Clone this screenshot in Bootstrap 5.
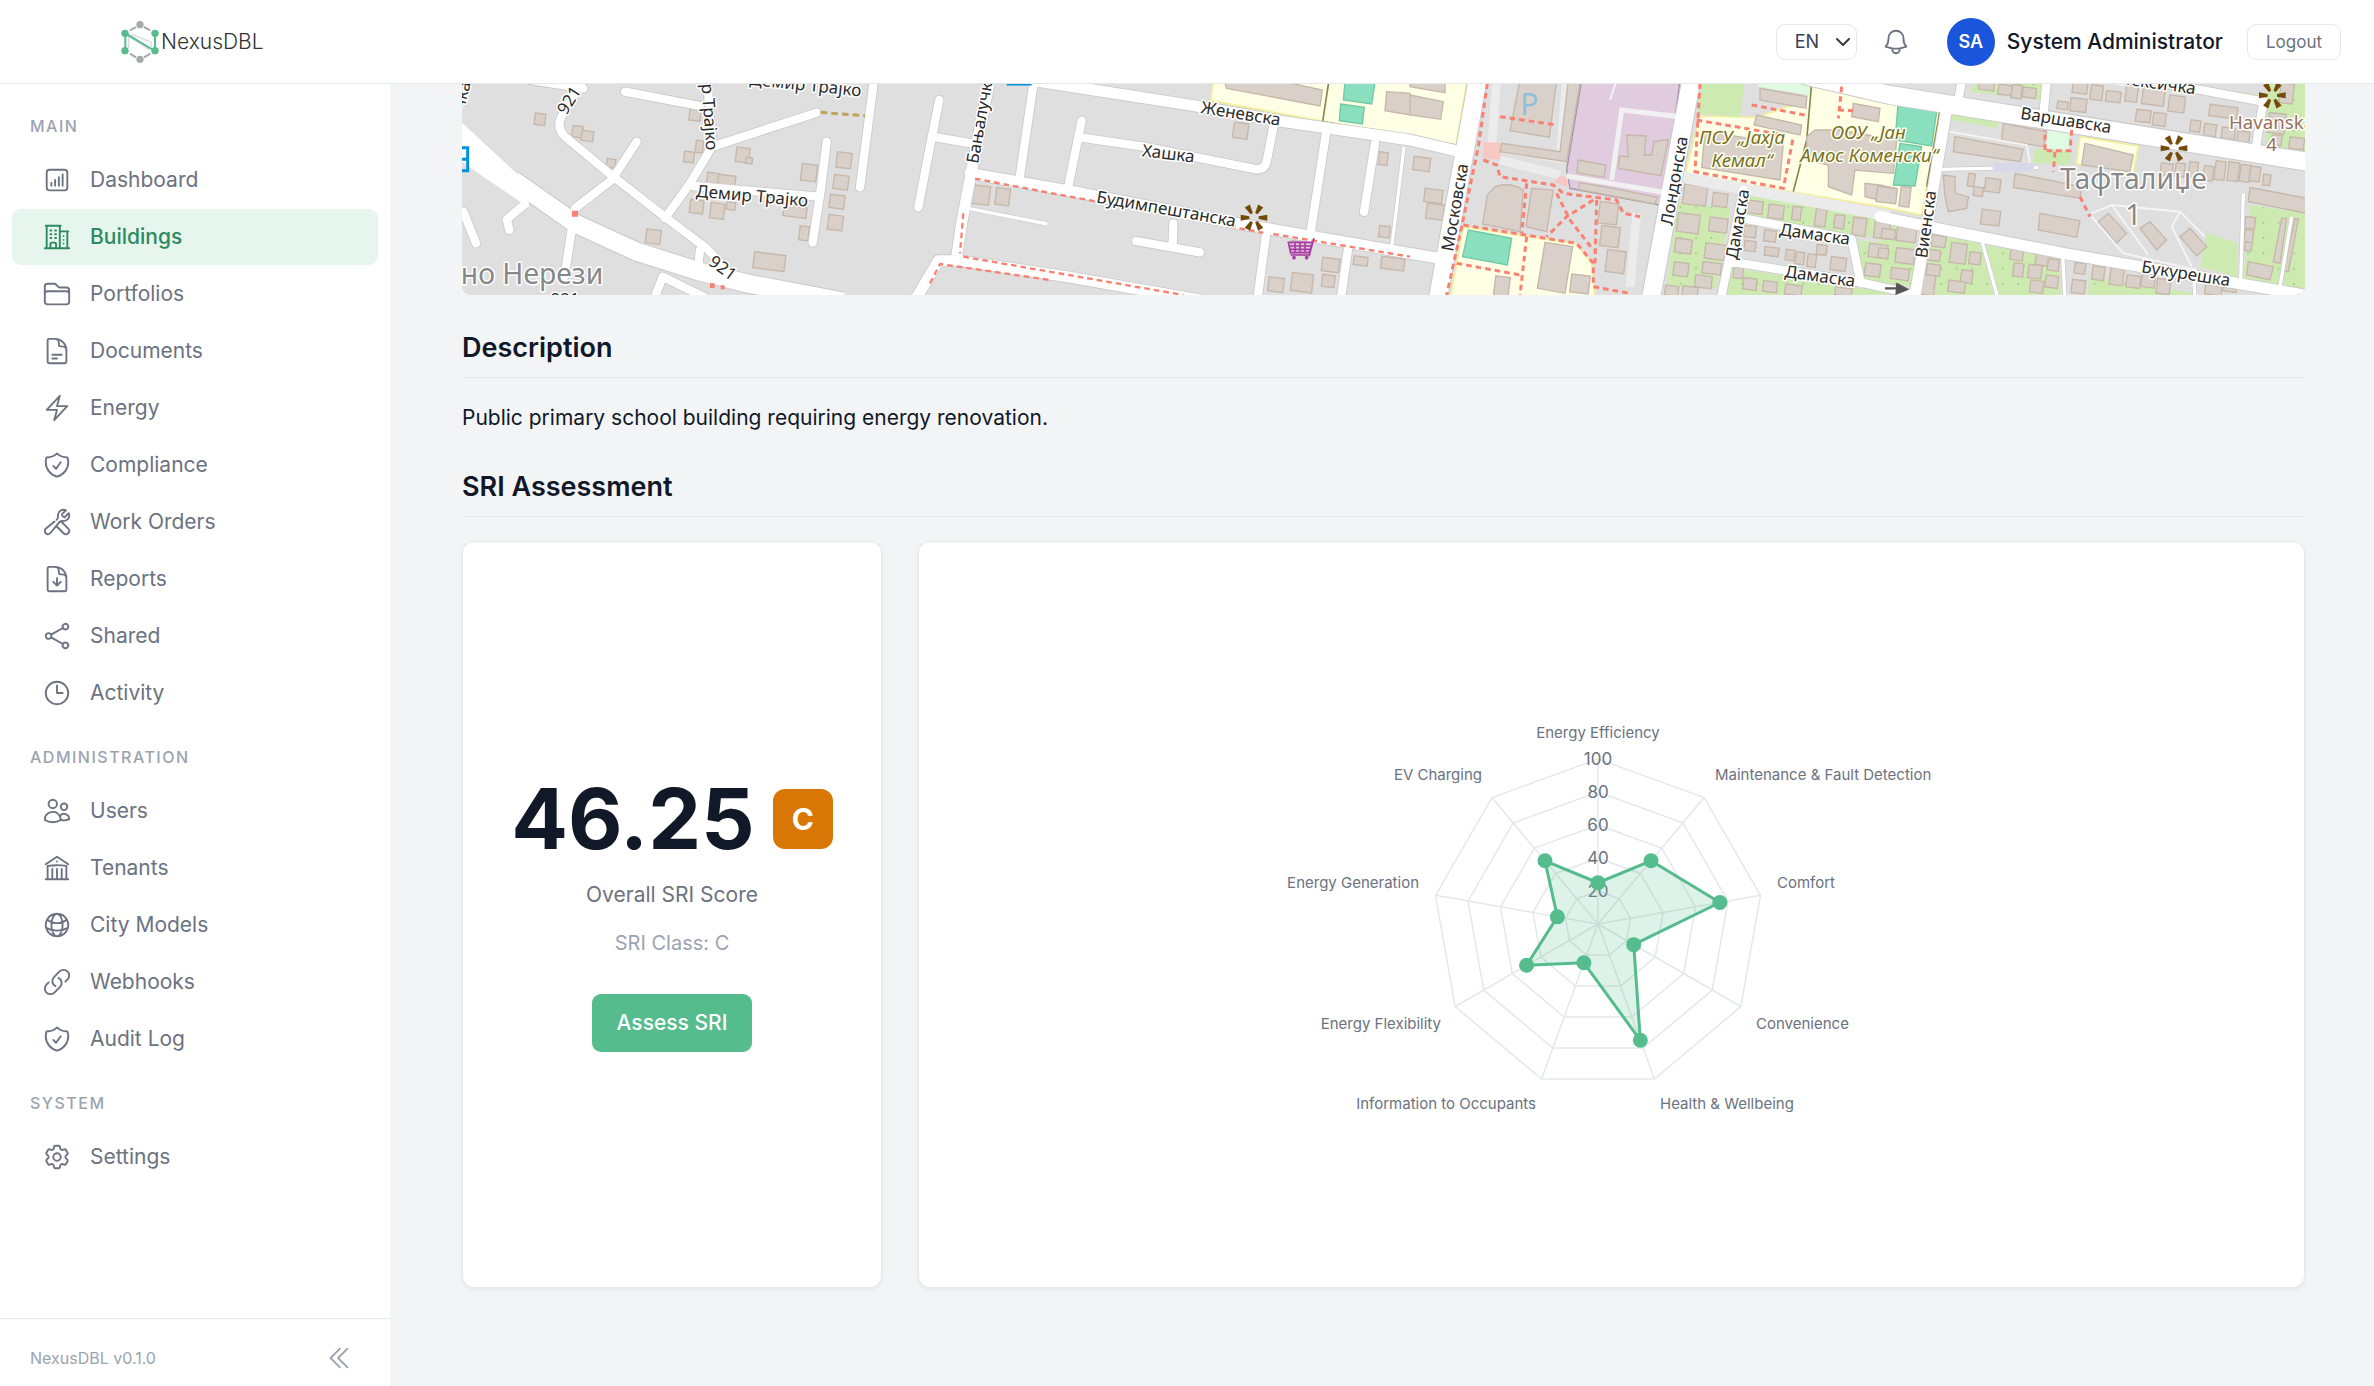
<!DOCTYPE html>
<html lang="en">
<head>
<meta charset="utf-8">
<meta name="viewport" content="width=device-width, initial-scale=1">
<title>NexusDBL – Building</title>
<link href="https://cdn.jsdelivr.net/npm/bootstrap@5.3.0/dist/css/bootstrap.min.css" rel="stylesheet">
<style>
body{font-family:Inter,"Liberation Sans",sans-serif;font-size:21px;line-height:32px;color:#111827;background:#f3f4f6}
.shell{min-height:100vh}
.topbar{height:84px;background:#fff;border-bottom:1px solid #e5e7eb;padding:0 33px 0 120px}
.brand-name{font-size:21px;line-height:32px;color:#333;font-weight:300}
.ico{width:30px;height:30px;flex:none;fill:none;stroke:currentColor;stroke-width:1.5;stroke-linecap:round;stroke-linejoin:round}
.lang{width:81px;height:36px;padding:0 24px 0 18px;font-size:18px;line-height:24px;color:#374151;border-color:#e5e7eb;border-radius:9px;background-position:right 5px center;background-size:16px 16px}
.iconbtn{color:#6b7280;background:none;border:0;padding:0;line-height:1;display:flex}
.iconbtn.faint{color:#9ca3af}
.user{gap:12px}
.avatar{width:48px;height:48px;border-radius:50%;background:#1a56db;color:#fff;font-size:18px;font-weight:600}
.who{font-weight:500}
.logout{height:36px;padding:0 18px;font-size:17px;line-height:24px;color:#6b7280;background:#fff;border:1px solid #e5e7eb;border-radius:9px}
.side{width:390px;flex:none;background:#fff}
.side-head{font-size:16px;line-height:24px;font-weight:500;letter-spacing:1.5px;color:#9ca3af;padding:0 30px;margin:24px 0 14px}
.side-head:first-child{margin-top:30px}
.side-nav{gap:1px;padding:0 12px}
.side-nav .nav-link{height:56px;padding:0 30px;gap:18px;color:#6b7280;border-radius:9px;font-size:21px}
.side-nav .nav-link.active{background:#e6f5ed;color:#2d8a5e;font-weight:500}
.side-foot{border-top:1px solid #e5e7eb;height:68px;padding:10px 36px 0 30px;font-size:16px;color:#9ca3af}
.page{padding:0 69px 98px 72px}
.map{height:211px;border-radius:0 0 9px 9px;overflow:hidden;background:#dfdfdf}
.map svg{display:block;width:100%;height:100%}
.sect{font-size:27px;line-height:36px;font-weight:600;padding-bottom:11px;margin:35px 0 24px;border-bottom:1px solid #e5e7eb}
.descr{margin:0}
.panels{gap:36px}
.panel{background:#fff;border:1px solid #e5e7eb;border-radius:12px;box-shadow:0 2px 4px rgba(0,0,0,.05)}
.score-panel{width:420px;flex:none}
.score-row{gap:18px}
.score{font-size:84px;line-height:84px;font-weight:700}
.grade{width:60px;height:60px;border-radius:12px;background:#d97706;color:#fff;font-size:30px;font-weight:700}
.score-label{color:#6b7280;margin:18px 0 17px}
.score-class{font-size:20px;line-height:30px;color:#9ca3af}
.btn-assess{--bs-btn-bg:#54bc8d;--bs-btn-color:#fff;--bs-btn-hover-bg:#47a97c;--bs-btn-hover-color:#fff;height:58px;padding:0 25px;margin-top:36px;font-size:21px;font-weight:500;border:0;border-radius:9px}
.radar{width:653px;height:400px;max-width:100%}
.radar text{font-family:Inter,sans-serif;font-size:15px;fill:#6b7280}
.radar .tick{font-size:17px;text-anchor:middle}
.st text{font-family:"Noto Sans",sans-serif;font-size:51px;fill:#2b2b2b;text-anchor:middle;paint-order:stroke;stroke:#fff;stroke-width:9px;stroke-linejoin:round}
.st .place{font-size:85px;fill:#888}
.st .school{font-size:56px;fill:#777020;font-style:italic;stroke:#fffff0}
.st .shop{font-size:56px;fill:#96705a}
.st .from{text-anchor:start}
.st .parking{font-size:90px;fill:#8fc0dc;stroke:none}
</style>
</head>
<body>
<div class="shell d-flex flex-column">
<header class="topbar d-flex align-items-center justify-content-between">
  <a href="#" class="d-flex align-items-center text-decoration-none">
    <svg width="41" height="44" viewBox="358 57 123 132" fill="none" aria-hidden="true">
      <path d="M388 88 406 78M430 78 449 88M388 158 406 169M430 169 449 158" stroke="#a7a9ac" stroke-width="6"/>
      <path d="M384 142V106l62 40M452 138V124L392 100" stroke="#dcdddf" stroke-width="5"/>
      <path d="M374 150V97l89 53V97" stroke="#54bc8d" stroke-width="6"/>
      <g fill="#a7a9ac"><circle cx="418" cy="71" r="11"/><circle cx="418" cy="175" r="11"/></g>
      <g fill="#54bc8d"><circle cx="373" cy="97" r="11"/><circle cx="373" cy="149" r="11"/><circle cx="463" cy="97" r="11"/><circle cx="463" cy="149" r="11"/></g>
    </svg>
    <span class="brand-name">NexusDBL</span>
  </a>
  <div class="d-flex align-items-center">
    <select class="form-select lang" aria-label="Language"><option>EN</option></select>
    <button class="iconbtn ms-4" aria-label="Notifications"><svg class="ico" viewBox="0 0 24 24"><path d="M14.857 17.082a23.848 23.848 0 0 0 5.454-1.31A8.967 8.967 0 0 1 18 9.75V9A6 6 0 0 0 6 9v.75a8.967 8.967 0 0 1-2.312 6.022c1.733.64 3.56 1.085 5.455 1.31m5.714 0a24.255 24.255 0 0 1-5.714 0m5.714 0a3 3 0 1 1-5.714 0"/></svg></button>
    <div class="user d-flex align-items-center ps-4 ms-2 me-4"><span class="avatar d-flex align-items-center justify-content-center ms-1">SA</span><span class="who">System Administrator</span></div>
    <button class="logout">Logout</button>
  </div>
</header>

<div class="d-flex flex-grow-1">
<aside class="side d-flex flex-column">
  <div class="flex-grow-1">
  <div class="side-head">MAIN</div>
  <nav class="side-nav nav flex-column">
    <a class="nav-link d-flex align-items-center" href="#"><svg class="ico" viewBox="0 0 24 24"><path d="M7.5 14.25v2.25m3-4.5v4.5m3-6.75v6.75m3-9v9M6 20.25h12A2.25 2.25 0 0 0 20.25 18V6A2.25 2.25 0 0 0 18 3.75H6A2.25 2.25 0 0 0 3.75 6v12A2.25 2.25 0 0 0 6 20.25Z"/></svg>Dashboard</a>
    <a class="nav-link active d-flex align-items-center" href="#"><svg class="ico" viewBox="0 0 24 24"><path d="M2.25 21h19.5m-18-18v18m10.5-18v18m6-13.5V21M6.75 6.75h.75m-.75 3h.75m-.75 3h.75m3-6h.75m-.75 3h.75m-.75 3h.75M6.75 21v-3.375c0-.621.504-1.125 1.125-1.125h2.25c.621 0 1.125.504 1.125 1.125V21M3 3h12m-.75 4.5H21m-3.75 3.75h.008v.008h-.008v-.008Zm0 3h.008v.008h-.008v-.008Zm0 3h.008v.008h-.008v-.008Z"/></svg>Buildings</a>
    <a class="nav-link d-flex align-items-center" href="#"><svg class="ico" viewBox="0 0 24 24"><path d="M2.25 12.75V12A2.25 2.25 0 0 1 4.5 9.75h15A2.25 2.25 0 0 1 21.75 12v.75m-8.69-6.44-2.12-2.12a1.5 1.5 0 0 0-1.061-.44H4.5A2.25 2.25 0 0 0 2.25 6v12a2.25 2.25 0 0 0 2.25 2.25h15A2.25 2.25 0 0 0 21.75 18V9a2.25 2.25 0 0 0-2.25-2.25h-5.379a1.5 1.5 0 0 1-1.06-.44Z"/></svg>Portfolios</a>
    <a class="nav-link d-flex align-items-center" href="#"><svg class="ico" viewBox="0 0 24 24"><path d="M19.5 14.25v-2.625a3.375 3.375 0 0 0-3.375-3.375h-1.5A1.125 1.125 0 0 1 13.5 7.125v-1.5a3.375 3.375 0 0 0-3.375-3.375H8.25m0 12.75h7.5m-7.5 3H12M10.5 2.25H5.625c-.621 0-1.125.504-1.125 1.125v17.25c0 .621.504 1.125 1.125 1.125h12.75c.621 0 1.125-.504 1.125-1.125V11.25a9 9 0 0 0-9-9Z"/></svg>Documents</a>
    <a class="nav-link d-flex align-items-center" href="#"><svg class="ico" viewBox="0 0 24 24"><path d="m3.75 13.5 10.5-11.25L12 10.5h8.25L9.75 21.75 12 13.5H3.75Z"/></svg>Energy</a>
    <a class="nav-link d-flex align-items-center" href="#"><svg class="ico" viewBox="0 0 24 24"><path id="shield" d="M9 12.75 11.25 15 15 9.75m-3-7.036A11.959 11.959 0 0 1 3.598 6 11.99 11.99 0 0 0 3 9.749c0 5.592 3.824 10.29 9 11.623 5.176-1.332 9-6.03 9-11.622 0-1.31-.21-2.571-.598-3.751h-.152c-3.196 0-6.1-1.248-8.25-3.285Z"/></svg>Compliance</a>
    <a class="nav-link d-flex align-items-center" href="#"><svg class="ico" viewBox="0 0 24 24"><path d="M11.42 15.17 17.25 21A2.652 2.652 0 0 0 21 17.25l-5.877-5.877M11.42 15.17l2.496-3.03c.317-.384.74-.626 1.208-.766M11.42 15.17l-4.655 5.653a2.548 2.548 0 1 1-3.586-3.586l6.837-5.63m5.108-.233c.55-.164 1.163-.188 1.743-.14a4.5 4.5 0 0 0 4.486-6.336l-3.276 3.277a3.004 3.004 0 0 1-2.25-2.25l3.276-3.276a4.5 4.5 0 0 0-6.336 4.486c.091 1.076-.071 2.264-.904 2.95l-.102.085"/></svg>Work Orders</a>
    <a class="nav-link d-flex align-items-center" href="#"><svg class="ico" viewBox="0 0 24 24"><path d="M19.5 14.25v-2.625a3.375 3.375 0 0 0-3.375-3.375h-1.5A1.125 1.125 0 0 1 13.5 7.125v-1.5a3.375 3.375 0 0 0-3.375-3.375H8.25m.75 12 3 3m0 0 3-3m-3 3v-6m-1.5-9H5.625c-.621 0-1.125.504-1.125 1.125v17.25c0 .621.504 1.125 1.125 1.125h12.75c.621 0 1.125-.504 1.125-1.125V11.25a9 9 0 0 0-9-9Z"/></svg>Reports</a>
    <a class="nav-link d-flex align-items-center" href="#"><svg class="ico" viewBox="0 0 24 24"><path d="M7.217 10.907a2.25 2.25 0 1 0 0 2.186m0-2.186c.18.324.283.696.283 1.093s-.103.77-.283 1.093m0-2.186 9.566-5.314m-9.566 7.5 9.566 5.314m0 0a2.25 2.25 0 1 0 3.935 2.186 2.25 2.25 0 0 0-3.935-2.186Zm0-12.814a2.25 2.25 0 1 0 3.933-2.185 2.25 2.25 0 0 0-3.933 2.185Z"/></svg>Shared</a>
    <a class="nav-link d-flex align-items-center" href="#"><svg class="ico" viewBox="0 0 24 24"><path d="M12 6v6h4.5m4.5 0a9 9 0 1 1-18 0 9 9 0 0 1 18 0Z"/></svg>Activity</a>
  </nav>
  <div class="side-head">ADMINISTRATION</div>
  <nav class="side-nav nav flex-column">
    <a class="nav-link d-flex align-items-center" href="#"><svg class="ico" viewBox="0 0 24 24"><path d="M15 19.128a9.38 9.38 0 0 0 2.625.372 9.337 9.337 0 0 0 4.121-.952 4.125 4.125 0 0 0-7.533-2.493M15 19.128v-.003c0-1.113-.285-2.16-.786-3.07M15 19.128v.106A12.318 12.318 0 0 1 8.624 21c-2.331 0-4.512-.645-6.374-1.766l-.001-.109a6.375 6.375 0 0 1 11.964-3.07M12 6.375a3.375 3.375 0 1 1-6.75 0 3.375 3.375 0 0 1 6.75 0Zm8.25 2.25a2.625 2.625 0 1 1-5.25 0 2.625 2.625 0 0 1 5.25 0Z"/></svg>Users</a>
    <a class="nav-link d-flex align-items-center" href="#"><svg class="ico" viewBox="0 0 24 24"><path d="M12 21v-8.25M15.75 21v-8.25M8.25 21v-8.25M3 9l9-6 9 6m-1.5 12V10.332A48.36 48.36 0 0 0 12 9.75c-2.551 0-5.056.2-7.5.582V21M3 21h18M12 6.75h.008v.008H12V6.75Z"/></svg>Tenants</a>
    <a class="nav-link d-flex align-items-center" href="#"><svg class="ico" viewBox="0 0 24 24"><path d="M12 21a9.004 9.004 0 0 0 8.716-6.747M12 21a9.004 9.004 0 0 1-8.716-6.747M12 21c2.485 0 4.5-4.03 4.5-9S14.485 3 12 3m0 18c-2.485 0-4.5-4.03-4.5-9S9.515 3 12 3m0 0a8.997 8.997 0 0 1 7.843 4.582M12 3a8.997 8.997 0 0 0-7.843 4.582m15.686 0A11.953 11.953 0 0 1 12 10.5c-2.998 0-5.74-1.1-7.843-2.918m15.686 0A8.959 8.959 0 0 1 21 12c0 .778-.099 1.533-.284 2.253m0 0A17.919 17.919 0 0 1 12 16.5c-3.162 0-6.133-.815-8.716-2.247m0 0A9.015 9.015 0 0 1 3 12c0-1.605.42-3.113 1.157-4.418"/></svg>City Models</a>
    <a class="nav-link d-flex align-items-center" href="#"><svg class="ico" viewBox="0 0 24 24"><path d="M13.19 8.688a4.5 4.5 0 0 1 1.242 7.244l-4.5 4.5a4.5 4.5 0 0 1-6.364-6.364l1.757-1.757m13.35-.622 1.757-1.757a4.5 4.5 0 0 0-6.364-6.364l-4.5 4.5a4.5 4.5 0 0 0 1.242 7.244"/></svg>Webhooks</a>
    <a class="nav-link d-flex align-items-center" href="#"><svg class="ico" viewBox="0 0 24 24"><use href="#shield"/></svg>Audit Log</a>
  </nav>
  <div class="side-head">SYSTEM</div>
  <nav class="side-nav nav flex-column">
    <a class="nav-link d-flex align-items-center" href="#"><svg class="ico" viewBox="0 0 24 24"><path d="M9.594 3.94c.09-.542.56-.94 1.11-.94h2.593c.55 0 1.02.398 1.11.94l.213 1.281c.063.374.313.686.645.87.074.04.147.083.22.127.325.196.72.257 1.075.124l1.217-.456a1.125 1.125 0 0 1 1.37.49l1.296 2.247a1.125 1.125 0 0 1-.26 1.431l-1.003.827c-.293.241-.438.613-.43.992a7.723 7.723 0 0 1 0 .255c-.008.378.137.75.43.991l1.004.827c.424.35.534.955.26 1.43l-1.298 2.247a1.125 1.125 0 0 1-1.369.491l-1.217-.456c-.355-.133-.75-.072-1.076.124a6.47 6.47 0 0 1-.22.128c-.331.183-.581.495-.644.869l-.213 1.281c-.09.543-.56.94-1.11.94h-2.594c-.55 0-1.019-.398-1.11-.94l-.213-1.281c-.062-.374-.312-.686-.644-.87a6.52 6.52 0 0 1-.22-.127c-.325-.196-.72-.257-1.076-.124l-1.217.456a1.125 1.125 0 0 1-1.369-.49l-1.297-2.247a1.125 1.125 0 0 1 .26-1.431l1.004-.827c.292-.24.437-.613.43-.991a6.932 6.932 0 0 1 0-.255c.007-.38-.138-.751-.43-.992l-1.004-.827a1.125 1.125 0 0 1-.26-1.43l1.297-2.247a1.125 1.125 0 0 1 1.37-.491l1.216.456c.356.133.751.072 1.076-.124.072-.044.146-.086.22-.128.332-.183.582-.495.644-.869l.214-1.28ZM15 12a3 3 0 1 1-6 0 3 3 0 0 1 6 0Z"/></svg>Settings</a>
  </nav>
  </div>
  <div class="side-foot d-flex align-items-center justify-content-between">
    <span>NexusDBL v0.1.0</span>
    <button class="iconbtn faint" aria-label="Collapse sidebar"><svg class="ico" viewBox="0 0 24 24"><path d="m18.75 4.5-7.5 7.5 7.5 7.5m-6-15L5.25 12l7.5 7.5"/></svg></button>
  </div>
</aside>

<main class="page flex-grow-1 d-flex flex-column">
  <div class="map">
  <svg viewBox="36 12 5529 633" preserveAspectRatio="xMidYMid slice" role="img" aria-label="Map of the building surroundings">
    <defs>
      <g id="r26" fill="none" stroke-linecap="round" stroke-linejoin="round">
        <path d="M240 0 400 25M395 5 332 115Q320 145 345 170L480 282 650 415 770 505 850 590M560 185 485 300 375 385M525 35 750 78M772 5 786 200 720 310 645 415M786 200 1100 98M730 318 1105 350M1130 185 1112 330 1088 488M1272 0 1230 322M1468 60 1440 200 1405 382M1445 170 1565 190M40 395 78 490M225 372 170 418 178 450M365 450 343 590M750 510 742 580M600 690 638 590 760 650"/>
        <path d="M1752 0 1708 300M1895 122 1855 320M1890 172 2080 200 2420 268Q2445 268 2450 245L2470 140M2058 483 2250 517M2170 430 2168 490M2450 450 2422 660M2628 160 2580 470M2775 190 2742 396M2695 500 2672 660"/>
        <path d="M3880 330 3812 660M3880 415 4205 478 4232 610M3840 545 4220 605 4380 640M4535 5 4525 60M4790 0 4780 110M5090 0 5440 65 5418 200"/>
      </g>
      <g id="r34" fill="none" stroke-linecap="round" stroke-linejoin="round">
        <path d="M1618 5 1565 270 1535 430 1520 530M1740 0 2250 80 2500 125 2880 180 3030 215M1560 280 1870 335 2360 430 2880 520 2970 535M1390 670 1465 542 1530 542 1850 590 2250 660M4492 75 4393 660M4290 410 4460 445 4840 520 5565 645"/>
      </g>
      <g id="r50" fill="none" stroke-linejoin="round">
        <path d="M190 300 375 430 560 515 750 575 890 610 1180 665M3083 0 2963 660M3724 0 3602 660M4060 -15 4320 45 5575 246"/>
      </g>
      <g id="r12" fill="none">
        <path d="M1555 385 1792 432M2862 200 2825 505M4465 268 4765 262M4595 480 4645 660M4838 525 4845 660M5232 600 5235 660M5380 340 5372 600M5525 410 5490 620"/>
      </g>
      <g id="star" fill="#734a08"><path id="ray" d="M-4-14-9-40 9-40 4-14Z" transform="rotate(30)"/><use href="#ray" transform="rotate(60)"/><use href="#ray" transform="rotate(120)"/><use href="#ray" transform="rotate(180)"/><use href="#ray" transform="rotate(240)"/><use href="#ray" transform="rotate(300)"/></g>
      <pattern id="trees" width="46" height="46" patternUnits="userSpaceOnUse"><rect width="46" height="46" fill="#cdebb0"/><circle cx="12" cy="14" r="3" fill="#9ccb84"/></pattern>
    </defs>
    <path fill="#dfdfdf" d="M0 0H5600V700H0Z"/>
    <path fill="#ffffe5" stroke="#f3ef9a" stroke-width="5" d="M2290 0 2282 62 2880 172 3018 195 3052 0ZM3040 440 3380 492 3425 550 3435 660 3000 660ZM3750 108 3920 112 4070 60 4085 0 4290 50 4470 82 4430 320 4415 405 4290 380 3705 282ZM4890 170 5065 198 5050 280 5010 265 5020 225 4905 200 4895 255 4880 250Z"/>
    <path fill="#e0cbdf" stroke="#a98fa8" stroke-width="4" d="M3395 0 3690 0 3645 340 3628 375 3360 325 3350 270Z"/>
    <path fill="#cdebb0" d="M3755 0 3885 0 3870 112 3745 100ZM4505 85 4645 110 4642 145 4505 120ZM4755 205 4865 215 4860 255 4750 250ZM5270 458 5365 490 5360 590 5250 560Z"/>
    <path fill="url(#trees)" d="M3680 370 3840 385 3800 625 3650 620ZM3890 345 4280 415 4370 420 4370 460 4220 470 3885 400ZM3830 560 4330 640 4330 660 3830 660ZM4225 480 4400 500 4395 620 4240 600ZM4580 0 4780 0 4770 60 4560 35ZM5400 375 5570 400 5570 645 5380 600ZM4440 460 4590 490 4635 660 4430 660ZM4600 495 4830 530 4832 660 4655 660ZM4920 590 5230 640 5230 660 4910 660ZM4290 435 4395 455 4385 600 4290 590ZM5070 0 5150 0 5430 45 5420 60 5060 10ZM5455 0 5570 0 5570 220 5445 195Z"/>
    <path fill="#dffce2" d="M3925 0 4082 0 4078 45 3925 20ZM4792 152 4860 155 4855 210 4790 205Z"/>
    <path fill="none" stroke="#8a8450" stroke-width="5" d="M4085 10 4070 180 4030 335M2637 0 2618 125 3018 195M4472 82 4430 320"/>
    <g fill="#8ae0be" stroke="#6fc9a4" stroke-width="4"><path d="M2685 5 2775 8 2765 72 2680 60ZM2672 72 2743 82 2737 132 2668 122ZM3055 450 3185 475 3172 555 3038 530ZM4345 62 4462 82 4445 198 4335 180ZM4350 190 4415 200 4395 318 4330 315Z"/></g>
    <path fill="none" stroke="#ececec" stroke-width="26" d="M3140 0 3125 200 3330 235 3350 0M3150 240 3330 285M3560 400 3540 620"/>
    <path fill="#f7c8c4" d="M3102 185 3155 190 3150 240 3098 235ZM3310 305 3330 288 3355 292 3350 320Z"/>
    <g id="bld" fill="#d9d0c9" stroke="#c6b7a9" stroke-width="4">
      <path d="M2325 10 2330 25 2610 78 2617 30 2500 5ZM2810 35 2880 40 2880 105 2805 92ZM2880 5 2985 5 2985 38 2880 20ZM2880 45 2980 65 2972 118 2880 105ZM3210 0 3320 0 3298 172 3180 152Z"/>
      <path d="M3355 0 3392 0 3350 245 3150 215 3155 190 3330 215ZM3530 165 3588 168 3583 225 3605 225 3612 185 3655 178 3632 287 3505 265 3508 228 3535 230ZM3385 240 3468 255 3462 292 3380 278ZM3390 308 3490 325 3622 352 3615 372 3385 328Z"/>
      <path d="M3135 320Q3180 305 3220 330L3210 455 3098 432 3112 345ZM3245 325 3310 330 3290 455 3228 440ZM3285 487 3368 500 3345 640 3262 625ZM3765 155 4000 190 3990 300 3755 262ZM4070 170 4095 150 4170 150 4340 180 4330 280 4215 270 4205 345 4135 320 4135 255 4070 240ZM4245 310 4290 315 4335 325 4330 370 4245 350Z"/>
      <path d="M3930 25 4070 50 4068 85 3930 60ZM3920 105 4055 135 4050 165 3912 135ZM4210 70 4290 85 4285 125 4205 110ZM4515 170 4720 208 4710 245 4510 215ZM4660 130 4790 155 4780 200 4655 180ZM4695 280 4895 320 4890 355 4690 322ZM4905 190 5050 225 5040 275 4895 255ZM4770 400 4890 422 4880 472 4765 450ZM4480 285 4515 290 4515 340 4555 350 4550 385 4495 395 4485 350ZM5400 322 5570 355 5570 400 5395 365ZM5395 545 5470 560 5460 600 5390 585ZM4975 400 5030 460 5000 490 4945 425ZM5100 425 5150 480 5120 510 5070 445ZM5220 445 5270 500 5240 528 5190 470ZM5495 415 5510 415 5490 550 5470 545ZM5535 415 5545 418 5515 575 5502 572Z"/>
    </g>
    <g stroke="#c9c9c9"><use href="#r12" stroke-width="14"/><use href="#r26" stroke-width="30"/><use href="#r34" stroke-width="38"/><use href="#r50" stroke-width="60"/></g>
    <path fill="none" stroke="#ebebeb" stroke-width="34" d="M3700 292 4320 408"/>
    <path fill="none" stroke="#f1f1f1" stroke-width="15" d="M3350 288 3690 345M3485 300 3515 90 3690 110"/>
    <path fill="#fff" d="M36 128 205 285 208 315 240 385 100 290 36 245Z"/>
    <g stroke="#fff"><use href="#r12" stroke-width="10"/><use href="#r26" stroke-width="25"/><use href="#r34" stroke-width="33"/><use href="#r50" stroke-width="54"/></g>
    <path fill="none" stroke="#f4f4f4" stroke-width="6" d="M4500 155 4730 195 4740 250M4925 400 4985 375 5190 395 5265 470M4925 410 5020 520 5240 570M4985 375 5095 525M5190 395 5165 440 5225 560M3500 0 3480 60"/>
    <path stroke="#d8d8ea" stroke-width="26" d="M4628 262 4752 262"/>
    <g fill="none" stroke="#fa8072" stroke-width="7" stroke-dasharray="17 12">
      <path d="M1575 296 1940 365M2340 440 2440 458M2470 462 2880 530M1540 530 2200 645M1440 610 1470 552 1800 600M1540 400 1530 520"/>
      <path stroke-width="9" d="M3112 10 3085 200 3035 440 2990 645M3150 110 3320 135M3100 240 3140 255 3150 290 3310 315 3340 340 3500 360 3520 400 3570 410M3230 310 3215 460M3040 435 3380 490 3430 550 3430 620 3540 640M3320 340 3360 420 3430 510M3430 360 3350 410 3290 470M3440 360 3435 550M3230 470 3210 645M3020 550 3210 585M3750 10 3735 275 4000 325 4030 170M3740 120 4000 165M3905 75 4065 105M4175 20 4165 115M4165 90 4210 92M4785 210 4785 150M4865 150 4860 212 4790 212M4815 215 4810 275M4890 350 4920 410"/>
    </g>
    <path fill="none" stroke="#c0a35a" stroke-width="9" stroke-dasharray="20 12" d="M1112 97 1245 107"/>
    <path fill="none" stroke="#0092da" stroke-width="9" d="M36 203H53V272H36M36 238H53M1670 12H1745"/>
    <path fill="#fa8072" d="M366 392h18v18h-18zM780 610h14v14h-14zM812 616h12v12h-12z"/>
    <use href="#star" transform="translate(2412 413)"/><use href="#star" transform="translate(5467 46)"/><use href="#star" transform="translate(5172 205)"/>
    <g fill="none" stroke="#ac39ac" stroke-width="5"><path d="M2592 475 2578 525H2522M2515 487H2588L2578 518H2522ZM2520 498H2585M2522 508H2582M2535 487V518M2550 487V518M2565 487V518"/><circle cx="2532" cy="533" r="3"/><circle cx="2570" cy="533" r="3"/></g>
    <path d="M4305 625H4345M4342 613 4370 628 4340 640Z" stroke="#555" stroke-width="7" fill="#555"/>
    <g class="st">
      <text transform="translate(372 70) rotate(-58)">921</text>
      <text transform="translate(52 50) rotate(-75)">чка</text>
      <text transform="translate(757 44) rotate(86)">Демир Трајко</text>
      <text transform="translate(1065 32) rotate(6)">Демир Трајко</text>
      <text transform="translate(905 365) rotate(5)">Демир Трајко</text>
      <text transform="translate(808 578) rotate(36)">921</text>
      <text transform="translate(345 676)">921</text>
      <text class="place" transform="translate(246 612)">но Нерези</text>
      <text transform="translate(1608 118) rotate(-80)">Бањалучка</text>
      <text transform="translate(2370 118) rotate(9)">Женевска</text>
      <text transform="translate(2153 238) rotate(7)">Хашка</text>
      <text transform="translate(2146 404) rotate(10)">Будимпештанска</text>
      <text transform="translate(3032 385) rotate(-80)">Московска</text>
      <text transform="translate(3690 305) rotate(-80)">Лондонска</text>
      <text transform="translate(3880 435) rotate(-80)">Дамаска</text>
      <text transform="translate(4092 480) rotate(8)">Дамаска</text>
      <text transform="translate(4108 606) rotate(8)">Дамаска</text>
      <text transform="translate(4445 435) rotate(-82)">Виенска</text>
      <text transform="translate(4845 138) rotate(9)">Варшавска</text>
      <text transform="translate(5115 26) rotate(8)">Мексичка</text>
      <text transform="translate(5205 598) rotate(9)">Букурешка</text>
      <text class="school" transform="translate(3876 192)">ПСУ „Јахја</text><text class="school" transform="translate(3876 260)">Кемал“</text>
      <text class="school" transform="translate(4255 178)">ООУ „Јан</text><text class="school" transform="translate(4258 246)">Амос Коменски“</text>
      <text class="place" transform="translate(5050 328)">Тафталиџе</text><text class="place" transform="translate(5050 435)">1</text>
      <text class="shop from" transform="translate(5337 148)">Havanska</text><text class="shop" transform="translate(5465 212)">4</text>
      <text class="parking" transform="translate(3238 106)">P</text>
    </g>
  </svg>
  </div>

  <h2 class="sect">Description</h2>
  <p class="descr">Public primary school building requiring energy renovation.</p>
  <h2 class="sect">SRI Assessment</h2>

  <div class="panels d-flex flex-grow-1">
    <section class="panel score-panel d-flex flex-column align-items-center justify-content-center">
      <div class="score-row d-flex align-items-center"><span class="score">46.25</span><span class="grade d-flex align-items-center justify-content-center">C</span></div>
      <div class="score-label">Overall SRI Score</div>
      <div class="score-class">SRI Class: C</div>
      <button class="btn btn-assess">Assess SRI</button>
    </section>
    <section class="panel flex-grow-1 d-flex align-items-center justify-content-center">
      <svg class="radar" id="radar" viewBox="1285 714 653 400" role="img" aria-label="SRI radar chart"></svg>
    </section>
  </div>
</main>
</div>
</div>
<script src="https://cdn.jsdelivr.net/npm/bootstrap@5.3.0/dist/js/bootstrap.bundle.min.js"></script>
<script>
// Houses on the map: centre x, centre y, width, height, all turned with the street grid
const houses = [
 [270,118,32,34],[383,155,32,34],[412,168,36,30],[483,250,26,26],[735,105,34,34],[748,200,22,36],[717,231,30,32],[878,225,40,44],[897,242,20,18],
 [790,296,38,34],[830,302,52,32],[740,380,40,40],[802,393,42,46],[843,378,26,22],[1035,395,70,32],[1077,278,46,50],[1182,241,44,46],[1173,307,44,42],[1161,365,44,40],[1156,428,44,44],[1062,460,28,42],[610,470,44,42],[958,545,94,48],
 [1592,345,54,56],[1658,350,42,50],[2372,152,44,46],[2800,236,26,38],[2803,455,32,34],[2642,555,52,40],[2635,603,38,36],[2556,608,64,54],[2478,614,46,42],[2732,543,42,26],[2828,551,70,36],[2552,505,60,40],
 [2915,252,50,40],[2950,348,54,40],[2955,395,52,46],[3475,400,56,64],[3480,470,56,60],[3497,545,56,66],[3390,612,56,54],[3155,625,44,70],
 [3735,345,70,60],[3715,430,66,56],[3805,435,54,42],[3810,360,44,40],[3700,498,50,42],[3795,515,60,46],[3693,568,44,40],[3785,565,56,34],[3760,605,50,36],[3665,632,40,30],[3720,635,46,30],
 [3916,382,44,38],[3978,395,46,40],[4040,400,26,40],[4112,412,32,54],[4168,425,30,40],[4228,440,40,54],[4296,450,46,50],[3900,455,36,34],[3960,468,36,34],[3900,498,34,30],[3965,515,42,26],[4020,525,26,32],[4050,535,26,36],[4085,542,26,38],[4115,510,30,30],[4165,552,46,40],[4284,513,56,40],[4268,570,46,38],[3865,578,28,34],[3900,612,40,34],[3960,620,42,32],[4030,630,50,30],[4180,635,50,24],
 [4310,345,60,46],[4365,350,30,60],[4315,462,40,30],[4370,458,58,54],[4365,528,56,44],[4350,582,54,34],[4300,520,30,30],[4466,484,42,34],[4450,526,40,32],[4525,520,48,60],[4575,535,34,36],[4450,570,40,34],[4435,615,38,60],[4550,590,34,38],[4520,620,50,34],
 [4564,300,20,38],[4585,335,28,26],[4628,316,46,40],[4622,413,56,44],[4700,525,38,32],[4705,570,30,40],[4780,540,46,34],[4755,575,40,40],[4810,555,34,34],[4760,620,40,36],[4805,605,38,36],[4890,565,32,32],[4945,580,36,40],[5000,590,40,50],[5050,605,42,36],[5095,600,40,44],[5140,620,40,44],[4885,620,40,40],[5290,630,50,30],[5340,620,40,30],
 [4610,15,46,30],[4665,30,40,30],[4700,35,30,40],[4738,38,40,30],[4890,22,44,36],[4940,38,36,44],[4990,50,44,32],[5045,40,36,50],[5110,50,66,50],[5180,72,48,48],[4885,75,48,40],[4838,76,32,22],[5080,108,44,36],[5128,118,38,38],[5320,95,84,34],[5236,138,30,34],[5280,150,36,36],[5335,160,40,34],[5380,170,36,32],[5480,130,50,60],[5510,40,40,60],[5540,190,44,34],[5480,180,30,30],
 [5150,268,36,36],[5190,270,28,40],[5230,268,26,44],[5275,280,28,44],[5310,272,30,56],[5350,275,32,56],[5385,280,30,50],[5415,282,30,44],[5450,300,22,32],[5400,428,30,34],[5396,470,26,40],[5395,500,20,26]
];
const NS = 'http://www.w3.org/2000/svg';
const add = (p, n, a, t) => { const e = document.createElementNS(NS, n); for (const k in a) e.setAttribute(k, a[k]); if (t) e.textContent = t; p.appendChild(e); return e; };
const bld = document.getElementById('bld');
houses.forEach(([x, y, w, h]) => add(bld, 'rect', {x: x - w / 2, y: y - h / 2, width: w, height: h, transform: `rotate(7 ${x} ${y})`}));

// Radar chart
const cx = 1598, cy = 923, R = 165, svg = document.getElementById('radar');
const data = [['Energy Efficiency',25,1598,737,'middle'],['Maintenance & Fault Detection',50,1715,779,'start'],['Comfort',75,1777,887,'start'],['Convenience',25,1756,1028,'start'],['Health & Wellbeing',75,1660,1108,'start'],['Information to Occupants',25,1536,1108,'end'],['Energy Flexibility',50,1441,1028,'end'],['Energy Generation',25,1419,887,'end'],['EV Charging',50,1482,779,'end']];
const pt = (i, v) => { const a = i * 2 * Math.PI / 9; return [cx + Math.sin(a) * R * v / 100, cy - Math.cos(a) * R * v / 100]; };
for (let v = 20; v <= 100; v += 20) add(svg, 'polygon', {points: data.map((d, i) => pt(i, v)).join(' '), fill: 'none', stroke: '#e5e7eb', 'stroke-width': 1.5});
data.forEach((d, i) => { const p = pt(i, 100); add(svg, 'line', {x1: cx, y1: cy, x2: p[0], y2: p[1], stroke: '#e5e7eb', 'stroke-width': 1.5}); });
for (let v = 20; v <= 100; v += 20) add(svg, 'text', {x: cx, y: cy - R * v / 100 + 6, class: 'tick'}, v);
add(svg, 'polygon', {points: data.map((d, i) => pt(i, d[1])).join(' '), fill: '#54bc8d', 'fill-opacity': .2, stroke: '#54bc8d', 'stroke-width': 3, 'stroke-linejoin': 'round'});
data.forEach((d, i) => { const p = pt(i, d[1]); add(svg, 'circle', {cx: p[0], cy: p[1], r: 7.5, fill: '#54bc8d'}); add(svg, 'text', {x: d[2], y: d[3], 'text-anchor': d[4]}, d[0]); });
</script>
</body>
</html>
